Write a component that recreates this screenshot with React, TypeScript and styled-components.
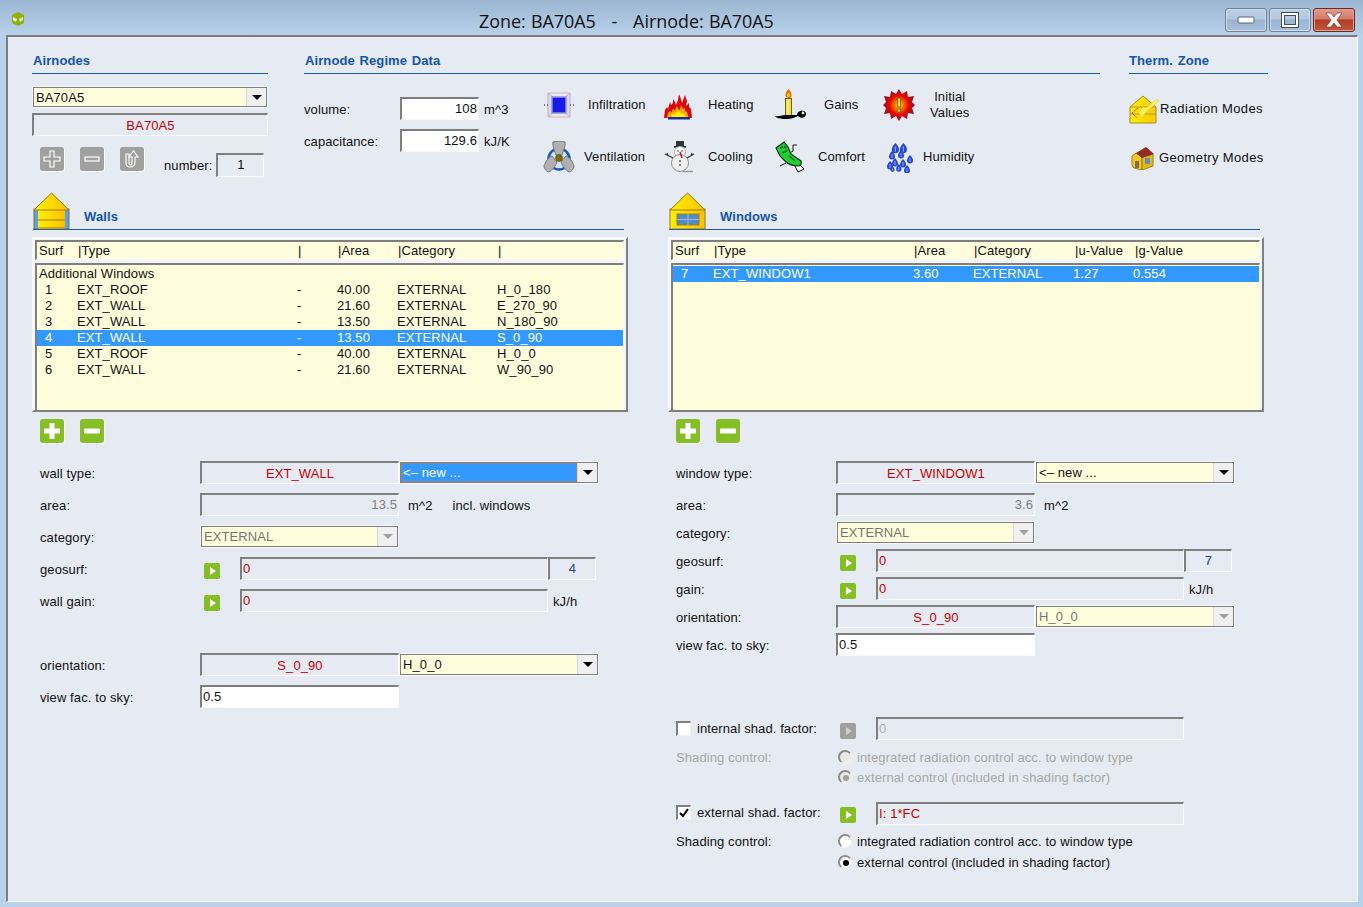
import React from "react";
import styled, { createGlobalStyle } from "styled-components";

const Global = createGlobalStyle`
  html, body { margin: 0; padding: 0; }
  body { width: 1363px; height: 907px; overflow: hidden; font-family: "Liberation Sans", Arial, sans-serif; font-size: 13px; color: #111; letter-spacing: 0.1px; }
  * { box-sizing: border-box; }
`;

const Win = styled.div`
  width: 1363px; height: 907px; display: flex; flex-direction: column; overflow: hidden;
  background: linear-gradient(180deg, #9cb5d2 0px, #b9d1ea 36px);
`;
const TitleBar = styled.div`
  height: 35px; flex: none; display: flex; align-items: flex-start; position: relative;
`;
const AppIcon = styled.svg`
  width: 16px; height: 16px; margin: 11px 0 0 10px; flex: none;
`;
const Title = styled.div`
  font-family: "Open Sans", "Noto Sans", sans-serif; font-size: 17.9px; letter-spacing: 0; word-spacing: 0.6px; color: #111; margin: 9px 0 0 453px; white-space: pre; line-height: 24px; flex: none;
`;
const WinButtons = styled.div`
  margin: 8px 8px 0 auto; display: flex; gap: 2px;
`;
const WinButton = styled.div<{ $close?: boolean }>`
  width: 42px; height: 24px; border-radius: 3px; display: flex; align-items: center; justify-content: center;
  border: 1px solid ${p => (p.$close ? "#6a2a2a" : "#6f7f95")};
  box-shadow: inset 0 0 0 1px ${p => (p.$close ? "#e0a090" : "#cfdcec")};
  background: ${p => p.$close
    ? "linear-gradient(180deg,#e09a8c 0%,#d27a6a 45%,#b53a22 50%,#c05a40 100%)"
    : "linear-gradient(180deg,#bccfe4 0%,#b3c8e0 45%,#9ab3d0 50%,#a8c0da 100%)"};
`;
const Panel = styled.div`
  flex: 1; margin: 0 5px 5px 6px; background: #e6eaf2;
  border-top: 2px solid #7d7d7d; border-left: 2px solid #7d7d7d; border-right: 1px solid #fff; border-bottom: 1px solid #f4f6fa;
  padding-left: 25px; display: flex; flex-direction: column; min-height: 0;
`;
const TopRow = styled.div`
  height: 155px; flex: none; display: flex;
`;
const Column = styled.div<{ $w: number; $ml?: number }>`
  width: ${p => p.$w}px; margin-left: ${p => p.$ml ?? 0}px; flex: none;
`;
const Heading = styled.div<{ $flush?: boolean }>`
  height: 37px; border-bottom: 1px solid #1d5cae; padding: 16px 0 0 ${p => (p.$flush ? 0 : 1)}px; font-weight: bold; color: #1356ae; font-size: 13px; line-height: 15px;
  letter-spacing: 0.1px; word-spacing: 1px; white-space: pre;
`;
const Sunken = styled.div<{ $w?: number; $h?: number; $bg?: string; $color?: string; $align?: string; $mt?: number; $pb?: number }>`
  width: ${p => (p.$w ? `${p.$w}px` : "100%")}; height: ${p => p.$h ?? 23}px; flex: none; margin-top: ${p => p.$mt ?? 0}px;
  background: ${p => p.$bg ?? "#e6eaf2"}; color: ${p => p.$color ?? "#111"};
  border-top: 2px solid #7f7f7f; border-left: 2px solid #7f7f7f; border-right: 1px solid #fbfbfb; border-bottom: 1px solid #fbfbfb;
  display: flex; align-items: center; justify-content: ${p => p.$align ?? "flex-start"}; padding: 0 1px ${p => p.$pb ?? 1}px 1px; line-height: 15px; white-space: pre; overflow: hidden;
`;
const ComboBox = styled.div<{ $w?: number; $h?: number; $disabled?: boolean }>`
  width: ${p => (p.$w ? `${p.$w}px` : "100%")}; height: ${p => p.$h ?? 23}px; flex: none; display: flex; background: #fefedd;
  border: 2px solid #7f7f7f; outline: 1px solid #f7f8fb; outline-offset: -1px;
  color: ${p => (p.$disabled ? "#767676" : "#111")};
`;
const ComboText = styled.div<{ $focus?: boolean }>`
  flex: 1; min-width: 0; padding: 0 2px; line-height: 20px; white-space: pre;
  ${p => p.$focus ? "background: #3399ff; color: #fff; outline: 1px dotted #e07a10; outline-offset: -1px;" : ""}
`;
const ComboButton = styled.div<{ $disabled?: boolean }>`
  width: 20px; flex: none; background: #f0f0f0; border-left: 1px solid #d8d8d8; display: flex; align-items: center; justify-content: center;
  &::after { content: ""; border-left: 5px solid transparent; border-right: 5px solid transparent; border-top: 5px solid ${p => (p.$disabled ? "#a0a0a0" : "#000")}; }
`;
const AirCombo = styled.div`margin-top: 12px;`;
const AirRed = styled.div`margin-top: 5px;`;
const ButtonRow = styled.div`
  display: flex; margin: 11px 0 0 8px; align-items: flex-start;
`;
const SquareBtn = styled.div<{ $gray?: boolean; $mr?: number }>`
  width: 24px; height: 24px; border-radius: 3px; flex: none; background: ${p => (p.$gray ? "#a0a0a0" : "#85bf25")};
  margin-right: ${p => p.$mr ?? 16}px; display: flex; align-items: center; justify-content: center; box-shadow: 1px 1px 0 #fff;
`;
const NumberGroup = styled.div`
  display: flex; align-items: center; margin: 6px 0 0 20px; gap: 4px;
`;
const RegimeBody = styled.div`
  display: flex; margin-top: 15px;
`;
const RegimeFields = styled.div`
  width: 239px; flex: none; display: flex; flex-direction: column; gap: 9px; padding-top: 8px;
`;
const FieldLine = styled.div`
  display: flex; align-items: center;
`;
const FieldLabel = styled.div<{ $w: number }>`
  width: ${p => p.$w}px; flex: none; white-space: pre; padding-top: 1px;
`;
const Unit = styled.div<{ $ml?: number }>`
  margin-left: ${p => p.$ml ?? 5}px; white-space: pre; padding-top: 2px;
`;
const ActionGrid = styled.div`
  display: grid; grid-template-columns: 120px 112px 108px 130px; grid-auto-rows: 32px; row-gap: 20px;
`;
const Action = styled.div`
  display: flex; align-items: center;
`;
const ActionIcon = styled.svg`
  width: 32px; height: 32px; flex: none;
`;
const ActionLabel = styled.div<{ $ml: number; $center?: boolean }>`
  margin-left: ${p => p.$ml}px; white-space: pre-line; line-height: 16px; text-align: ${p => (p.$center ? "center" : "left")};
`;
const ThermBody = styled.div`
  display: flex; flex-direction: column; margin-top: 20px; gap: 19px;
`;
const ThermItem = styled.div<{ $ml?: number }>`
  display: flex; align-items: center; height: 30px; margin-left: ${p => p.$ml ?? 0}px; letter-spacing: 0.35px;
`;
const ThermIcon = styled.svg<{ $s: number }>`
  width: ${p => p.$s}px; height: ${p => p.$s}px; flex: none;
`;
const Columns = styled.div`
  display: flex; flex: 1; min-height: 0;
`;
const Side = styled.div<{ $ml?: number }>`
  width: 596px; flex: none; margin-left: ${p => p.$ml ?? 0}px;
`;
const SectionHead = styled.div<{ $w: number }>`
  height: 38px; width: ${p => p.$w}px; border-bottom: 1px solid #1d5cae; display: flex; align-items: flex-end;
`;
const SectionIcon = styled.svg`
  width: 38px; height: 37px; flex: none; display: block;
`;
const SectionTitle = styled.div`
  margin: 0 0 5px 13px; font-weight: bold; color: #1356ae; line-height: 15px; letter-spacing: 0.1px;
`;
const TableFrame = styled.div`
  width: 596px; height: 175px; margin: 7px 0 0 -1px; padding: 1px 2px 0 1px; background: #f3f4f7;
  border-top: 2px solid #f8f9fb; border-left: 2px solid #f8f9fb; border-right: 2px solid #808080; border-bottom: 2px solid #808080;
`;
const TableHeader = styled.div<{ $cols: string }>`
  height: 20px; border-top: 2px solid #7f7f7f; border-left: 2px solid #7f7f7f; border-right: 1px solid #f8f9fb; border-bottom: 1px solid #f8f9fb;
  background: #fefedd; display: grid; grid-template-columns: ${p => p.$cols}; padding-left: 2px; line-height: 16px; white-space: pre; align-items: center;
`;
const TableList = styled.div<{ $pt: number }>`
  margin-top: 3px; height: 147px; border-top: 2px solid #7f7f7f; border-left: 2px solid #7f7f7f; border-right: 1px solid #f8f9fb;
  background: #fefedd; padding-top: ${p => p.$pt}px;
`;
const TableRow = styled.div<{ $cols: string; $sel?: boolean }>`
  display: grid; grid-template-columns: ${p => p.$cols}; height: 16px; line-height: 16px; padding-left: 2px; white-space: pre;
  ${p => p.$sel ? "background: #3399ff; color: #fff;" : ""}
`;
const NumCell = styled.div`padding-left: 6px;`;
const AddRow = styled.div`
  display: flex; margin: 7px 0 0 7px;
`;
const Form = styled.div`
  margin-top: 18px; padding-left: 7px;
`;
const FormRow = styled.div<{ $mt?: number; $h?: number }>`
  display: flex; height: ${p => p.$h ?? 23}px; margin-top: ${p => p.$mt ?? 0}px; align-items: center;
`;
const Label = styled.div<{ $w?: number; $muted?: boolean }>`
  width: ${p => p.$w ?? 160}px; flex: none; white-space: pre; color: ${p => (p.$muted ? "#a8a8a8" : "#111")};
`;
const FormLabel = styled(Label)`
  padding-top: 2px;
`;
const CheckLabel = styled.div<{ $pb?: number }>`
  width: 160px; flex: none; display: flex; align-items: center; white-space: pre; padding-bottom: ${p => p.$pb ?? 0}px;
`;
const Check = styled.div`
  width: 15px; height: 15px; flex: none; background: #fff; margin-right: 6px; display: flex; align-items: center; justify-content: center;
  border-top: 2px solid #808080; border-left: 2px solid #808080; border-right: 1px solid #f4f4f4; border-bottom: 1px solid #f4f4f4;
`;
const PlaySlot = styled.div`
  width: 40px; flex: none; padding-left: 4px; align-self: flex-start; padding-top: 6px;
`;
const PlayBtn = styled.div<{ $gray?: boolean }>`
  width: 16px; height: 16px; border-radius: 2px; background: ${p => (p.$gray ? "#a0a0a0" : "#85bf25")}; display: flex; align-items: center; justify-content: center;
  &::after { content: ""; border-top: 4px solid transparent; border-bottom: 4px solid transparent; border-left: 6px solid ${p => (p.$gray ? "#d0d0d0" : "#fff")}; margin-left: 1px; }
`;
const RadioRow = styled.div<{ $mt?: number }>`
  display: flex; height: 20px; align-items: center; margin-top: ${p => p.$mt ?? 0}px;
`;
const RadioDot = styled.div<{ $on?: boolean; $muted?: boolean }>`
  width: 14px; height: 14px; border-radius: 50%; flex: none; margin: 0 5px 0 2px; display: flex; align-items: center; justify-content: center;
  background: ${p => (p.$muted ? "#e8e8e8" : "#fff")}; border: 1px solid #8a8a8a; border-top-width: 2px; border-left-width: 2px; border-right-color: #f0f0f0; border-bottom-color: #f0f0f0;
  &::after { content: ""; width: 6px; height: 6px; border-radius: 50%; background: ${p => (p.$on ? (p.$muted ? "#a0a0a0" : "#000") : "transparent")}; }
`;
const RadioText = styled.div<{ $muted?: boolean }>`
  white-space: pre; color: ${p => (p.$muted ? "#a8a8a8" : "#111")};
`;

const RED = "#cc0000";
const wallHead = "39px 220px 40px 60px 100px 1fr";
const wallCols = "38px 220px 40px 60px 100px 1fr";
const winHead = "39px 200px 60px 101px 60px 1fr";
const winCols = "38px 200px 60px 100px 60px 1fr";

const PlusIcon = ({ thin }: { thin?: boolean }) => thin ? (
  <svg width="24" height="24" viewBox="0 0 24 24"><path d="M10 4h4v6h6v4h-6v6h-4v-6H4v-4h6z" fill="none" stroke="#fff" strokeWidth="1.2" /></svg>
) : (
  <svg width="24" height="24" viewBox="0 0 24 24"><path d="M9.500 4h5v5.500H20v5h-5.500V20h-5v-5.500H4v-5h5.500z" fill="#fff" /></svg>
);
const MinusIcon = ({ thin }: { thin?: boolean }) => thin ? (
  <svg width="24" height="24" viewBox="0 0 24 24"><rect x="5" y="10" width="14" height="4" fill="none" stroke="#fff" strokeWidth="1.2" /></svg>
) : (
  <svg width="24" height="24" viewBox="0 0 24 24"><rect x="4" y="9.500" width="16" height="5" rx="1" fill="#fff" /></svg>
);
const UndoIcon = () => (
  <svg width="24" height="24" viewBox="0 0 24 24"><path d="M6 7v9c0 3 2 4 4.500 4s4.500-2 4.500-4V10h3l-4.500-6L9 10h3v6c0 1-.5 2-1.500 2S9 17 9 16V7z" fill="none" stroke="#fff" strokeWidth="1.1" /></svg>
);

const Infiltration = () => (
  <ActionIcon viewBox="0 0 32 32">
    <path d="M5 4l6 5v14l-6 5zM27 4l-6 5v14l6 5z" fill="#d9dcf6" stroke="#c8a8b8" />
    <path d="M5 4h22M5 28h22" stroke="#d8b0bc" />
    <rect x="9" y="8" width="14" height="16" fill="#1a1ae8" stroke="#9090e0" strokeWidth="1.5" />
    <path d="M1 16h1M4 16h1M27 16h1M30 16h1" stroke="#000" />
  </ActionIcon>
);
const Flame = () => (
  <ActionIcon viewBox="0 0 32 32">
    <path d="M1 29l1-8 2-3 1 2 2-7 1 3 2-2 0-4 2 3 1 3 2-5 1-6 2 5 1 4 3-8 2 6-1 5 3-3 0 4 2 2 1 9z" fill="#dc0808" />
    <path d="M4 29l1-5 2-2 1 2 2-4 2 1 2-4 1 3 2 1 1-5 2 4 2-1 0 3 2 1 2 7z" fill="#ffa808" />
    <path d="M8 29l1-4 2 1 2-3 2 1 1-3 2 4 3-1 1 3 2 2z" fill="#fff000" />
    <rect x="5" y="28" width="22" height="2.500" fill="#1a2aa8" />
  </ActionIcon>
);
const Candle = () => (
  <ActionIcon viewBox="0 0 32 32">
    <path d="M10.500 6c0-3 2-5 3-6 1 1 3 3 3 6s-1 3-3 3-3-1-3-3z" fill="#f07010" />
    <ellipse cx="13.500" cy="6" rx="1.500" ry="2" fill="#ffd000" />
    <rect x="10.500" y="9.500" width="6" height="17" fill="#f4dc48" stroke="#706020" />
    <path d="M13 11v13" stroke="#fff8a0" />
    <path d="M0 27c3 1 7-1 10-1h12c0-5 9-6 9-1 0 4-5 5-8 2-4 2-7 3-11 3-5 0-10 0-12-3z" fill="#000" />
    <circle cx="28" cy="24" r="1.400" fill="#e6eaf2" />
  </ActionIcon>
);
const Burst = () => (
  <ActionIcon viewBox="0 0 32 32">
    <defs>
      <radialGradient id="bg"><stop offset="0" stopColor="#ffd000" /><stop offset="0.35" stopColor="#f86000" /><stop offset="0.6" stopColor="#e80808" /><stop offset="1" stopColor="#901020" /></radialGradient>
    </defs>
    <path d="M16 0l3 5 5-3 1 6 6-1-2 6 3 3-3 3 2 6-6-1-1 6-5-3-3 5-3-5-5 3-1-6-6 1 2-6-3-3 3-3-2-6 6 1 1-6 5 3z" fill="url(#bg)" />
    <path d="M14.500 9h3v9h-3zM14.500 20h3v3h-3z" fill="#f4e020" stroke="#605000" strokeWidth="0.7" />
  </ActionIcon>
);
const Fan = () => (
  <ActionIcon viewBox="0 0 32 32">
    <circle cx="16" cy="18" r="10.500" fill="#d8e0f4" stroke="#1a5ac0" strokeWidth="2.500" />
    <path d="M10 1c3-1 9-1 12 0 1 3-2 10-3 13h-6C12 11 9 4 10 1z" fill="#b0b0b0" stroke="#787878" />
    <path d="M1 25c1-4 5-9 8-10l5 6c-1 3-5 9-8 10-2 0-5-3-5-6z" fill="#b0b0b0" stroke="#787878" />
    <path d="M31 25c-1-4-5-9-8-10l-5 6c1 3 5 9 8 10 2 0 5-3 5-6z" fill="#b0b0b0" stroke="#787878" />
    <circle cx="16" cy="17" r="3.500" fill="#807000" stroke="#333" strokeWidth=".5" />
  </ActionIcon>
);
const Snowman = () => (
  <ActionIcon viewBox="0 0 32 32">
    <rect x="13" y="0" width="8" height="5" fill="#333" /><rect x="11" y="5" width="12" height="1.500" fill="#222" />
    <circle cx="17" cy="11" r="5.500" fill="#fafafa" stroke="#b0b0b0" />
    <circle cx="17" cy="22" r="8.500" fill="#f0f0f0" stroke="#909090" />
    <path d="M17 11l2 6" stroke="#d01010" strokeWidth="1.500" />
    <path d="M10 17L2 13M24 17l7-4M4 12l1 3M29 12l-1 3" stroke="#333" strokeWidth="1.200" fill="none" />
    <circle cx="15" cy="10" r=".7" fill="#000" /><circle cx="19" cy="10" r=".7" fill="#000" />
    <circle cx="17" cy="20" r=".8" fill="#000" /><circle cx="17" cy="24" r=".8" fill="#000" />
    <path d="M20 30.500h10" stroke="#999" strokeWidth="1.500" />
  </ActionIcon>
);
const Comfort = () => (
  <ActionIcon viewBox="0 0 32 32">
    <path d="M13 13l5-3v-6h4M11 22L5 25M20 25l3 6 6-3-4-4" stroke="#111" strokeWidth="1" fill="#fff" />
    <path d="M1 7l8-6 4 5 3 7 10 7c1 1 0 4-2 5-5 0-11-2-14-5L5 15z" fill="#20d030" stroke="#0a3810" strokeWidth="1.200" />
    <path d="M5 7l3-1M9 5l2 2M7 11c2 1 4 0 5-2M14 15l6 5" stroke="#052" strokeWidth="1.500" fill="none" />
  </ActionIcon>
);
const Humidity = () => (
  <ActionIcon viewBox="0 0 32 32">
    {[[10, 2, 1.2], [18, 2, 1.2], [7, 10, 1], [16, 9, 1], [25, 14, 1], [18, 18, 1], [10, 17, 1], [5, 20, 1], [22, 24, 1], [14, 23, .9], [8, 25, .7]].map(([x, y, s], i) => (
      <g key={i} transform={`translate(${x} ${y}) scale(${s})`}>
        <path d="M2 0c2 2 3 4 3 5.500a3 3 0 0 1-6 0C-1 4 0 2 2 0z" fill="#2a48d8" />
        <path d="M2 3v4" stroke="#90a8f4" strokeWidth="1" />
      </g>
    ))}
  </ActionIcon>
);
const RadiationIcon = () => (
  <ThermIcon $s={30} viewBox="0 0 30 30">
    <defs><linearGradient id="rg" x1="0" x2="1"><stop offset="0" stopColor="#fff000" /><stop offset="1" stopColor="#f8c808" /></linearGradient></defs>
    <path d="M1 13L14 2l13 11v16H1z" fill="url(#rg)" stroke="#a89020" />
    <path d="M1 13h26M1 20h26" stroke="#b09820" />
    <path d="M10 19l3 4 5-6 12-10-2-2-11 9-3-1z" fill="#f8f060" stroke="#e8d040" strokeWidth=".6" />
    <path d="M9 14l-6 5 3 3M3 19l5 5" stroke="#e02010" fill="none" strokeWidth="1" strokeDasharray="2 1" />
  </ThermIcon>
);
const GeometryIcon = () => (
  <ThermIcon $s={24} viewBox="0 0 24 24">
    <path d="M1 10l4-3 6 4v13l-8-2-2-3z" fill="#f4c818" stroke="#a08020" />
    <path d="M11 11l11-3v12l-11 4z" fill="#e8b810" stroke="#a08020" />
    <path d="M5 7l10-6 8 7-12 4z" fill="#8c2c22" />
    <rect x="14" y="12" width="5" height="6" fill="#6090c0" />
    <rect x="4" y="15" width="4" height="7" fill="#807050" />
  </ThermIcon>
);
const WallHouse = () => (
  <SectionIcon viewBox="0 0 38 37">
    <defs><linearGradient id="wg" x1="0" x2="1"><stop offset="0" stopColor="#fff000" /><stop offset="1" stopColor="#fcc000" /></linearGradient></defs>
    <rect x="1" y="17" width="35" height="20" fill="#5da0e8" stroke="#807030" />
    <rect x="5" y="17" width="27" height="20" fill="url(#wg)" />
    <path d="M5 28h27M5 36h27" stroke="#987c10" />
    <path d="M1 18L18.500 1 36 18z" fill="url(#wg)" stroke="#987c10" />
  </SectionIcon>
);
const WindowHouse = () => (
  <SectionIcon viewBox="0 0 38 37">
    <defs><linearGradient id="wh" x1="0" x2="1"><stop offset="0" stopColor="#fff000" /><stop offset="1" stopColor="#fcc000" /></linearGradient></defs>
    <rect x="1" y="17" width="35" height="20" fill="url(#wh)" stroke="#987c10" />
    <path d="M1 18L18.500 1 36 18z" fill="url(#wh)" stroke="#987c10" />
    <rect x="8" y="22" width="22" height="11" fill="#4f8cc8" stroke="#a08018" />
    <path d="M19 22v11M8 27.500h22" stroke="#9dbcd8" />
  </SectionIcon>
);

const Combo = ({ text, w, h, focus, disabled }: { text: string; w?: number; h?: number; focus?: boolean; disabled?: boolean }) => (
  <ComboBox $w={w} $h={h} $disabled={disabled}>
    <ComboText $focus={focus}>{text}</ComboText>
    <ComboButton $disabled={disabled} />
  </ComboBox>
);

const Grip = () => (
  <AddRow>
    <SquareBtn><PlusIcon /></SquareBtn>
    <SquareBtn><MinusIcon /></SquareBtn>
  </AddRow>
);

const Shading = ({ muted, first }: { muted?: boolean; first: number }) => (
  <>
    <RadioRow $mt={first}>
      <Label $muted={muted}>Shading control:</Label>
      <RadioDot $muted={muted} />
      <RadioText $muted={muted}>integrated radiation control acc. to window type</RadioText>
    </RadioRow>
    <RadioRow $mt={muted ? 0 : 1}>
      <Label />
      <RadioDot $muted={muted} $on />
      <RadioText $muted={muted}>external control (included in shading factor)</RadioText>
    </RadioRow>
  </>
);

const wallRows = [
  ["1", "EXT_ROOF", "-", "40.00", "EXTERNAL", "H_0_180"],
  ["2", "EXT_WALL", "-", "21.60", "EXTERNAL", "E_270_90"],
  ["3", "EXT_WALL", "-", "13.50", "EXTERNAL", "N_180_90"],
  ["4", "EXT_WALL", "-", "13.50", "EXTERNAL", "S_0_90"],
  ["5", "EXT_ROOF", "-", "40.00", "EXTERNAL", "H_0_0"],
  ["6", "EXT_WALL", "-", "21.60", "EXTERNAL", "W_90_90"],
];

export default function App() {
  return (
    <Win>
      <Global />
      <TitleBar>
        <AppIcon viewBox="0 0 16 16">
          <path d="M8 1l6 3v8l-6 3-6-3V4z" fill="#8fae10" />
          <path d="M3 6l4 2-1 3-3-2zM13 6L9 8l1 3 3-2z" fill="#e8f4c8" />
        </AppIcon>
        <Title>{"Zone: BA70A5   -   Airnode: BA70A5"}</Title>
        <WinButtons>
          <WinButton><svg width="18" height="8" viewBox="0 0 18 8"><rect x="1" y="1" width="16" height="6" rx="1" fill="#fff" stroke="#55657a" /></svg></WinButton>
          <WinButton><svg width="18" height="16" viewBox="0 0 18 16"><rect x="2" y="2" width="14" height="12" fill="none" stroke="#3f4f63" strokeWidth="4" /><rect x="2" y="2" width="14" height="12" fill="none" stroke="#fff" strokeWidth="2" /></svg></WinButton>
          <WinButton $close><svg width="20" height="16" viewBox="0 0 20 16"><path d="M2 1h5l3 4 3-4h5l-5 7 5 7h-5l-3-4-3 4H2l5-7z" fill="#f4f4f4" stroke="#70302a" strokeWidth=".6" /></svg></WinButton>
        </WinButtons>
      </TitleBar>
      <Panel>
        <TopRow>
          <Column $w={236} $ml={-1}>
            <Heading>Airnodes</Heading>
            <AirCombo><Combo text="BA70A5" h={22} /></AirCombo>
            <AirRed><Sunken $color={RED} $align="center" $pb={0}>BA70A5</Sunken></AirRed>
            <ButtonRow>
              <SquareBtn $gray><PlusIcon thin /></SquareBtn>
              <SquareBtn $gray><MinusIcon thin /></SquareBtn>
              <SquareBtn $gray $mr={0}><UndoIcon /></SquareBtn>
              <NumberGroup>
                <span>number:</span>
                <Sunken $w={48} $h={24} $align="center" $pb={2}>1</Sunken>
              </NumberGroup>
            </ButtonRow>
          </Column>
          <Column $w={796} $ml={36}>
            <Heading>Airnode Regime Data</Heading>
            <RegimeBody>
              <RegimeFields>
                <FieldLine>
                  <FieldLabel $w={96}>volume:</FieldLabel>
                  <Sunken $w={79} $bg="#fff" $align="flex-end">108</Sunken>
                  <Unit>m^3</Unit>
                </FieldLine>
                <FieldLine>
                  <FieldLabel $w={96}>capacitance:</FieldLabel>
                  <Sunken $w={79} $bg="#fff" $align="flex-end">129.6</Sunken>
                  <Unit>kJ/K</Unit>
                </FieldLine>
              </RegimeFields>
              <ActionGrid>
                <Action><Infiltration /><ActionLabel $ml={13}>Infiltration</ActionLabel></Action>
                <Action><Flame /><ActionLabel $ml={13}>Heating</ActionLabel></Action>
                <Action><Candle /><ActionLabel $ml={17}>Gains</ActionLabel></Action>
                <Action><Burst /><ActionLabel $ml={15} $center>{"Initial\nValues"}</ActionLabel></Action>
                <Action><Fan /><ActionLabel $ml={9}>Ventilation</ActionLabel></Action>
                <Action><Snowman /><ActionLabel $ml={13}>Cooling</ActionLabel></Action>
                <Action><Comfort /><ActionLabel $ml={11}>Comfort</ActionLabel></Action>
                <Action><Humidity /><ActionLabel $ml={8}>Humidity</ActionLabel></Action>
              </ActionGrid>
            </RegimeBody>
          </Column>
          <Column $w={139} $ml={29}>
            <Heading $flush>Therm. Zone</Heading>
            <ThermBody>
              <ThermItem><RadiationIcon /><ActionLabel $ml={1}>Radiation Modes</ActionLabel></ThermItem>
              <ThermItem $ml={2}><GeometryIcon /><ActionLabel $ml={4}>Geometry Modes</ActionLabel></ThermItem>
            </ThermBody>
          </Column>
        </TopRow>
        <Columns>
          <Side>
            <SectionHead $w={591}>
              <WallHouse />
              <SectionTitle>Walls</SectionTitle>
            </SectionHead>
            <TableFrame>
              <TableHeader $cols={wallHead}>
                <span>Surf</span><span>|Type</span><span>|</span><span>|Area</span><span>|Category</span><span>|</span>
              </TableHeader>
              <TableList $pt={1}>
                <TableRow $cols="1fr">Additional Windows</TableRow>
                {wallRows.map((r, i) => (
                  <TableRow key={r[0]} $cols={wallCols} $sel={i === 3}>
                    <NumCell>{r[0]}</NumCell><span>{r[1]}</span><span>{r[2]}</span><span>{r[3]}</span><span>{r[4]}</span><span>{r[5]}</span>
                  </TableRow>
                ))}
              </TableList>
            </TableFrame>
            <Grip />
            <Form>
              <FormRow>
                <FormLabel>wall type:</FormLabel>
                <Sunken $w={199} $color={RED} $align="center" $pb={0}>EXT_WALL</Sunken>
                <Combo text="<– new ..." w={200} focus />
              </FormRow>
              <FormRow $mt={9}>
                <FormLabel>area:</FormLabel>
                <Sunken $w={199} $color="#808080" $align="flex-end">13.5</Sunken>
                <Unit $ml={9}>m^2</Unit><Unit $ml={20}>incl. windows</Unit>
              </FormRow>
              <FormRow $mt={9}>
                <FormLabel>category:</FormLabel>
                <Combo text="EXTERNAL" w={199} disabled />
              </FormRow>
              <FormRow $mt={9}>
                <FormLabel>geosurf:</FormLabel>
                <PlaySlot><PlayBtn /></PlaySlot>
                <Sunken $w={308} $color={RED}>0</Sunken>
                <Sunken $w={48} $color="#2244a0" $align="center">4</Sunken>
              </FormRow>
              <FormRow $mt={9}>
                <FormLabel>wall gain:</FormLabel>
                <PlaySlot><PlayBtn /></PlaySlot>
                <Sunken $w={308} $color={RED}>0</Sunken>
                <Unit>kJ/h</Unit>
              </FormRow>
              <FormRow $mt={41}>
                <FormLabel>orientation:</FormLabel>
                <Sunken $w={199} $color={RED} $align="center" $pb={0}>S_0_90</Sunken>
                <Combo text="H_0_0" w={200} />
              </FormRow>
              <FormRow $mt={9}>
                <FormLabel>view fac. to sky:</FormLabel>
                <Sunken $w={199} $bg="#fff">0.5</Sunken>
              </FormRow>
            </Form>
          </Side>
          <Side $ml={40}>
            <SectionHead $w={591}>
              <WindowHouse />
              <SectionTitle>Windows</SectionTitle>
            </SectionHead>
            <TableFrame>
              <TableHeader $cols={winHead}>
                <span>Surf</span><span>|Type</span><span>|Area</span><span>|Category</span><span>|u-Value</span><span>|g-Value</span>
              </TableHeader>
              <TableList $pt={1}>
                <TableRow $cols={winCols} $sel>
                  <NumCell>7</NumCell><span>EXT_WINDOW1</span><span>3.60</span><span>EXTERNAL</span><span>1.27</span><span>0.554</span>
                </TableRow>
              </TableList>
            </TableFrame>
            <Grip />
            <Form>
              <FormRow>
                <FormLabel>window type:</FormLabel>
                <Sunken $w={199} $color={RED} $align="center" $pb={0}>EXT_WINDOW1</Sunken>
                <Combo text="<– new ..." w={200} />
              </FormRow>
              <FormRow $mt={9}>
                <FormLabel>area:</FormLabel>
                <Sunken $w={199} $color="#808080" $align="flex-end">3.6</Sunken>
                <Unit $ml={9}>m^2</Unit>
              </FormRow>
              <FormRow $mt={5}>
                <FormLabel>category:</FormLabel>
                <Combo text="EXTERNAL" w={199} disabled />
              </FormRow>
              <FormRow $mt={5}>
                <FormLabel>geosurf:</FormLabel>
                <PlaySlot><PlayBtn /></PlaySlot>
                <Sunken $w={308} $color={RED}>0</Sunken>
                <Sunken $w={48} $color="#2244a0" $align="center">7</Sunken>
              </FormRow>
              <FormRow $mt={5}>
                <FormLabel>gain:</FormLabel>
                <PlaySlot><PlayBtn /></PlaySlot>
                <Sunken $w={308} $color={RED}>0</Sunken>
                <Unit>kJ/h</Unit>
              </FormRow>
              <FormRow $mt={5}>
                <FormLabel>orientation:</FormLabel>
                <Sunken $w={199} $color={RED} $align="center" $pb={0}>S_0_90</Sunken>
                <Combo text="H_0_0" w={200} disabled />
              </FormRow>
              <FormRow $mt={5}>
                <FormLabel>view fac. to sky:</FormLabel>
                <Sunken $w={199} $bg="#fff">0.5</Sunken>
              </FormRow>
              <FormRow $mt={61}>
                <CheckLabel><Check />internal shad. factor:</CheckLabel>
                <PlaySlot><PlayBtn $gray /></PlaySlot>
                <Sunken $w={308} $color="#b0b0b0">0</Sunken>
              </FormRow>
              <Shading muted first={7} />
              <FormRow $mt={14} $h={24}>
                <CheckLabel $pb={1}>
                  <Check><svg width="10" height="10" viewBox="0 0 10 10"><path d="M1 5l3 3 5-7" fill="none" stroke="#000" strokeWidth="2" /></svg></Check>
                  external shad. factor:
                </CheckLabel>
                <PlaySlot><PlayBtn /></PlaySlot>
                <Sunken $w={308} $color={RED} $mt={1}>I: 1*FC</Sunken>
              </FormRow>
              <Shading first={6} />
            </Form>
          </Side>
        </Columns>
      </Panel>
    </Win>
  );
}
